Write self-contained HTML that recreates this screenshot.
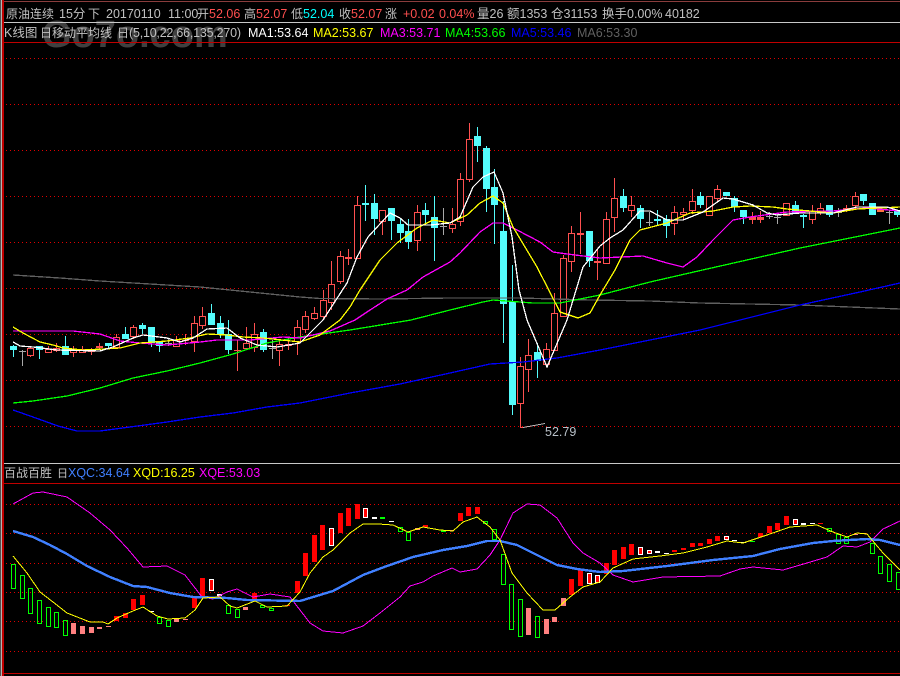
<!DOCTYPE html>
<html><head><meta charset="utf-8"><style>
html,body{margin:0;padding:0;background:#000;width:900px;height:676px;overflow:hidden}
svg{display:block}
text{font-family:"Liberation Sans","Noto Sans CJK SC",sans-serif;font-size:12.5px;fill:#c0c0c0}
.z{font-size:12px}
.r{fill:#ff4f4f}.c{fill:#00ffff}
</style></head><body>
<svg width="900" height="676" viewBox="0 0 900 676" xmlns="http://www.w3.org/2000/svg">
<defs><pattern id="d" x="2" y="0" width="4" height="1" patternUnits="userSpaceOnUse"><rect width="1" height="1" fill="#e00000"/></pattern></defs>
<rect width="900" height="676" fill="#000"/>
<text x="42" y="47" style="font-size:38px;font-weight:bold;fill:#404040">Go7o.com</text>
<g shape-rendering="crispEdges">
<path d="M0 1.5H900" stroke="#8a3c3c"/>
<path d="M3 22.5H900" stroke="#c8c8c8"/>
<path d="M3 42.5H900M3 483.5H900M3 673.5H900" stroke="#c00000"/>
<path d="M3 463.5H900" stroke="#c8c8c8"/>
<rect x="0" y="0" width="1" height="676" fill="#505050"/>
<rect x="1" y="0" width="1" height="676" fill="#b4b4b4"/>
<rect x="2" y="0" width="2" height="676" fill="#c00000"/>
<g fill="url(#d)"><rect x="5" y="58" width="895" height="1"/><rect x="5" y="104" width="895" height="1"/><rect x="5" y="150" width="895" height="1"/><rect x="5" y="196" width="895" height="1"/><rect x="5" y="242" width="895" height="1"/><rect x="5" y="288" width="895" height="1"/><rect x="5" y="334" width="895" height="1"/><rect x="5" y="380" width="895" height="1"/><rect x="5" y="426" width="895" height="1"/><rect x="5" y="504" width="895" height="1"/><rect x="5" y="533" width="895" height="1"/><rect x="5" y="563" width="895" height="1"/><rect x="5" y="592" width="895" height="1"/><rect x="5" y="621" width="895" height="1"/><rect x="5" y="651" width="895" height="1"/></g>

<!-- wicks -->
<path stroke="#ff5050" fill="none" d="M30.5 346V357M48.5 346V353M56.5 343V352M73.5 346V357M82.5 346V353M91.5 348V355M99.5 343V350M116.5 334V349M133.5 325V339M176.5 336V346M185.5 334V345M194.5 316V352M202.5 307V329M237.5 340V371M246.5 327V350M254.5 323V352M279.5 340V366M288.5 337V350M297.5 320V355M305.5 311V333M314.5 307V320M323.5 290V320M331.5 261V310M340.5 251V284M348.5 249V265M357.5 196V258M382.5 210V235M417.5 205V251M452.5 208V233M460.5 173V226M469.5 123V182M520.5 357V428M528.5 339V392M546.5 343V364M554.5 293V350M563.5 255V316M571.5 226V272M580.5 212V254M597.5 250V280M606.5 212V263M614.5 178V232M631.5 196V217M674.5 206V235M683.5 208V220M692.5 189V214M717.5 185V201M752.5 212V224M760.5 211V223M812.5 205V224M820.5 203V215M846.5 205V212M855.5 192V210"/>
<path stroke="#54fcfc" fill="none" d="M13.5 345V357M39.5 346V359M65.5 336V355M108.5 343V349M125.5 327V339M142.5 323V334M151.5 327V347M159.5 342V352M211.5 304V325M220.5 316V338M228.5 320V354M263.5 329V352M365.5 185V221M374.5 194V235M391.5 208V240M400.5 219V243M408.5 219V249M425.5 203V223M434.5 196V261M477.5 127V162M486.5 146V212M494.5 169V244M503.5 201V343M512.5 265V415M537.5 343V378M589.5 231V267M623.5 189V212M640.5 205V228M657.5 210V226M666.5 215V238M700.5 192V208M734.5 196V212M743.5 210V224M795.5 201V214M803.5 214V228M829.5 205V217M863.5 194V205M872.5 203V215M897.5 210V217"/>
<path stroke="#a8a8a8" fill="none" d="M22.5 350V366M19 351.5H26M168.5 338V346M165 343.5H172M272.5 340V359M269 348.5H276M443.5 208V235M440 226.5H447M649.5 212V226M646 222.5H653M769.5 212V219M766 216.5H773M777.5 213V224M774 217.5H781M838.5 208V217M835 212.5H842M889.5 210V224M886 212.5H893"/>

<!-- cyan bodies -->
<path fill="#54fcfc" d="M10 346h7v4h-7zM36 346h7v4h-7zM62 346h7v9h-7zM105 343h7v3h-7zM122 334h7v5h-7zM139 325h7v4h-7zM148 327h7v16h-7zM156 342h7v4h-7zM208 313h7v12h-7zM217 323h7v11h-7zM225 334h7v16h-7zM260 332h7v18h-7zM362 203h7v2h-7zM371 203h7v16h-7zM388 208h7v13h-7zM397 224h7v9h-7zM405 231h7v11h-7zM422 210h7v5h-7zM431 217h7v11h-7zM474 136h7v10h-7zM483 148h7v41h-7zM491 187h7v18h-7zM500 231h7v73h-7zM509 302h7v103h-7zM534 352h7v9h-7zM586 231h7v30h-7zM620 196h7v12h-7zM637 208h7v11h-7zM654 219h7v2h-7zM663 219h7v7h-7zM697 196h7v9h-7zM723 192h7v4h-7zM731 198h7v9h-7zM740 210h7v7h-7zM792 205h7v9h-7zM800 215h7v2h-7zM826 205h7v10h-7zM860 194h7v7h-7zM869 203h7v12h-7zM894 210h7v5h-7z"/>
<!-- red hollow bodies -->
<path stroke="#ff5050" fill="#000" d="M27.5 348.5h6v7h-6zM45.5 349.5h6v3h-6zM53.5 348.5h6v2h-6zM70.5 349.5h6v3h-6zM79.5 349.5h6v3h-6zM113.5 337.5h6v10h-6zM130.5 327.5h6v9h-6zM173.5 340.5h6v6h-6zM191.5 323.5h6v18h-6zM199.5 316.5h6v9h-6zM243.5 343.5h6v5h-6zM251.5 334.5h6v13h-6zM276.5 344.5h6v6h-6zM294.5 327.5h6v14h-6zM302.5 316.5h6v13h-6zM311.5 313.5h6v5h-6zM320.5 300.5h6v16h-6zM328.5 284.5h6v18h-6zM337.5 256.5h6v25h-6zM354.5 205.5h6v53h-6zM379.5 210.5h6v11h-6zM414.5 212.5h6v28h-6zM449.5 224.5h6v4h-6zM457.5 179.5h6v42h-6zM466.5 139.5h6v40h-6zM517.5 366.5h6v37h-6zM525.5 355.5h6v14h-6zM543.5 349.5h6v15h-6zM551.5 313.5h6v37h-6zM560.5 258.5h6v58h-6zM568.5 233.5h6v28h-6zM603.5 219.5h6v44h-6zM611.5 198.5h6v19h-6zM628.5 205.5h6v5h-6zM671.5 212.5h6v11h-6zM680.5 212.5h6v2h-6zM689.5 201.5h6v9h-6zM706.5 196.5h6v19h-6zM714.5 189.5h6v9h-6zM783.5 203.5h6v12h-6zM809.5 211.5h6v8h-6zM817.5 208.5h6v3h-6zM852.5 196.5h6v9h-6z"/>
<!-- red thin filled -->
<path fill="#ff5050" d="M88 350h7v2h-7zM96 346h7v2h-7zM182 340h7v1h-7zM234 350h7v1h-7zM285 344h7v2h-7zM345 257h7v2h-7zM577 233h7v2h-7zM594 261h7v2h-7zM749 217h7v3h-7zM757 217h7v3h-7zM843 208h7v3h-7z"/>
<rect x="877" y="209" width="7" height="3" fill="#ff7040"/>
<path stroke="#ff5050" d="M520 427.5h4"/>
<path stroke="#b8b8b8" fill="none" d="M523 427.5L545 423.5"/>

<!-- MA lines -->
<g fill="none" stroke-width="1.3">
<path stroke="#606060" d="M13 275L60 278L100 281L150 284L200 287L250 292L300 297L320 298.500L380 299L450 298L480 298L520 298L590 300L650 301L700 303L800 305L900 309"/>
<path stroke="#0000ff" d="M13 410L33 417L58 426L77 431L100 431L130 427L167 422L200 417L233 413L267 407L300 403L350 393L400 384L450 373L490 364L523 362L557 358L600 350L700 330L800 305L860 292L900 283"/>
<path stroke="#00ff00" d="M13 403L33 401L67 396L100 388L133 378L167 371L200 363L233 354L267 343L300 337L350 330L411 320L450 310L483 302L493 300L533 303L560 303L600 295L650 282L707 269L800 248L900 228"/>
<path stroke="#ff00ff" d="M13 331L73 331L100 334L120 341L140 343L167 345L200 342L217 340L250 340L283 337L300 338L330 331L355 320L367 312L387 299L407 290L423 277L450 262L460 253L480 232L493 223L503 223L517 230L540 242L553 252L567 254L600 258L643 256L667 263L683 267L697 257L713 240L733 220L750 217L787 212L833 211L867 208L900 211"/>
<path stroke="#ffff00" d="M13 327L23 333L40 342L53 345L63 348L83 350L103 349L120 348L140 343L167 341L190 338L207 334L227 335L243 337L263 338L273 339L300 342L320 335L340 320L350 307L360 290L380 260L397 243L417 228L433 220L450 223L467 215L480 203L493 196L503 203L513 227L537 267L560 312L578 318L590 313L600 295L615 270L630 240L640 230L667 223L690 213L713 211L733 207L750 206L773 207L787 209L833 213L857 209L900 207"/>
<path stroke="#ffffff" d="M13 342L20 346L33 347L57 350L100 351L113 347L133 338L143 335L167 338L180 342L193 338L207 329L227 328L240 338L257 345L277 347L300 343L323 320L347 283L357 257L368 237L390 213L400 218L408 225L430 225L450 223L460 217L473 187L483 177L494 172L503 193L512 237L519 290L527 320L547 367L567 320L583 267L600 246L610 238L623 230L640 211L650 211L667 220L683 220L703 212L723 198L733 199L753 205L767 213L777 215L800 213L833 213L857 207L887 207L900 211"/>
</g>

<!-- sub bars -->
<path fill="#ff0000" d="M114 616h5v5h-5zM123 613h5v5h-5zM131 599h5v11h-5zM140 595h5v10h-5zM192 597h5v11h-5zM200 578h5v18h-5zM252 593h5v6h-5zM285 605h5v1h-5zM295 581h5v12h-5zM303 553h5v23h-5zM312 535h5v27h-5zM320 525h5v25h-5zM338 513h5v20h-5zM346 508h5v18h-5zM355 504h5v15h-5zM423 525h5v2h-5zM458 513h5v8h-5zM466 507h5v9h-5zM475 507h5v7h-5zM569 579h5v16h-5zM578 569h5v17h-5zM604 563h5v11h-5zM612 550h5v15h-5zM621 547h5v12h-5zM629 544h5v11h-5zM672 550h5v2h-5zM681 548h5v2h-5zM690 543h5v4h-5zM698 543h5v3h-5zM707 539h5v5h-5zM715 536h5v5h-5zM758 533h5v4h-5zM767 526h5v7h-5zM775 523h5v7h-5zM784 516h5v9h-5zM818 523h5v1h-5z"/>
<path fill="#ff0000" stroke="#ffffff" d="M209.500 579.500h4v11h-4zM329.500 528.500h4v17h-4zM363.500 508.500h4v9h-4zM587.500 573.500h4v10h-4zM595.500 575.500h4v7h-4zM638.500 547.500h4v7h-4zM647.500 550.500h4v3h-4zM724.500 536.500h4v3h-4zM793.500 519.500h4v5h-4z"/>
<path fill="none" stroke="#ffffff" d="M372.500 517.500h4v1h-4z"/>
<path fill="#ffffff" d="M149 611h5v1h-5zM217 594h5v2h-5zM389 521h5v1h-5zM655 551h5v2h-5zM664 553h5v1h-5zM732 540h5v1h-5zM741 542h5v1h-5zM801 523h5v2h-5zM810 523h5v1h-5z"/>
<path fill="#ff8080" d="M71 623h5v11h-5zM80 626h5v8h-5zM89 627h5v6h-5zM97 627h5v2h-5zM106 626h5v1h-5zM174 619h5v3h-5zM183 619h5v1h-5zM243 607h5v3h-5zM277 606h5v1h-5zM415 528h5v2h-5zM449 530h5v1h-5zM526 608h5v27h-5zM544 619h5v15h-5zM552 617h5v5h-5zM561 598h5v8h-5zM853 534h5v1h-5zM861 533h5v1h-5z"/>
<path fill="#00ff00" d="M380 517h5v2h-5zM441 530h5v2h-5zM750 541h5v1h-5z"/>
<path fill="none" stroke="#00ff00" d="M11.500 564.500h4v24h-4zM20.500 575.500h4v23h-4zM28.500 588.500h4v25h-4zM37.500 600.500h4v23h-4zM46.500 607.500h4v19h-4zM54.500 612.500h4v15h-4zM63.500 620.500h4v15h-4zM157.500 617.500h4v6h-4zM166.500 620.500h4v6h-4zM226.500 605.500h4v8h-4zM235.500 609.500h4v8h-4zM260.500 605.500h4v2h-4zM269.500 608.500h4v2h-4zM398.500 527.500h4v4h-4zM406.500 532.500h4v8h-4zM483.500 521.500h4v2h-4zM492.500 529.500h4v10h-4zM501.500 554.500h4v30h-4zM509.500 584.500h4v45h-4zM518.500 599.500h4v37h-4zM535.500 616.500h4v21h-4zM827.500 528.500h4v3h-4zM836.500 534.500h4v9h-4zM844.500 537.500h4v6h-4zM870.500 543.500h4v10h-4zM878.500 556.500h4v17h-4zM887.500 564.500h4v17h-4zM896.500 572.500h4v17h-4z"/>

<!-- sub lines -->
<g fill="none">
<path stroke="#ff00ff" d="M13 504L33 493L43 492L67 497L90 513L110 530L127 548L143 567L167 566L185 575L202 597L213 599L227 592L237 589L253 597L270 594L290 597L300 610L310 623L323 631L343 633L363 626L380 613L400 597L410 586L423 582L433 576L452 568L460 572L477 569L490 555L500 540L513 513L527 504L540 505L557 518L573 543L583 553L600 563L613 575L633 582L663 577L720 576L740 569L753 567L783 570L807 563L827 557L843 546L857 547L870 542L883 529L900 521"/>
<path stroke="#4080ff" stroke-width="2.4" d="M13 531L33 537L50 545L67 554L87 566L110 577L133 586L147 587L170 593L193 597L227 598L247 600L300 601L333 591L363 575L387 566L413 557L443 550L467 546L487 541L500 541L517 545L537 555L557 565L577 569L600 572L623 571L667 566L713 560L753 556L780 549L813 543L833 541L867 539L880 540L900 545"/>
<path stroke="#ffff00" d="M13 556L27 573L40 592L53 602L67 613L90 622L103 622L108 624L117 618L133 611L143 607L157 616L168 619L185 618L195 610L203 598L220 597L230 606L237 608L255 601L267 607L287 606L300 592L310 573L323 557L333 550L350 533L363 524L378 524L393 525L408 532L423 527L440 530L453 531L463 522L477 517L490 527L500 540L512 573L527 593L543 610L555 610L570 597L583 587L600 582L613 568L633 559L660 556L683 553L707 547L727 541L743 543L767 535L790 527L817 525L833 532L847 537L857 533L867 534L883 553L900 570"/>
</g>
</g>

<!-- header text -->
<text x="6" y="18" class="z">原油连续</text><text x="59" y="18">15分</text><text x="88" y="18" class="z">下</text>
<text x="106" y="18">20170110</text><text x="168" y="18">11:00</text><text x="197" y="18" class="z">开</text><text x="209" y="18" class="r">52.06</text>
<text x="244" y="18" class="z">高</text><text x="256" y="18" class="r">52.07</text>
<text x="291" y="18" class="z">低</text><text x="303" y="18" class="c">52.04</text>
<text x="339" y="18" class="z">收</text><text x="351" y="18" class="r">52.07</text>
<text x="385" y="18" class="z">涨</text><text x="403" y="18" class="r">+0.02</text><text x="439" y="18" class="r">0.04%</text>
<text x="477" y="18">量26</text><text x="507" y="18">额1353</text><text x="551" y="18">仓31153</text><text x="602" y="18">换手0.00%</text><text x="665" y="18">40182</text>

<text x="4" y="37">K线图</text><text x="40" y="37" class="z">日移动平均线</text><text x="117" y="37" class="z">日</text><text x="129" y="37" textLength="112">(5,10,22,66,135,270)</text>
<text x="248" y="37" style="fill:#ffffff">MA1:53.64</text>
<text x="313" y="37" style="fill:#ffff00">MA2:53.67</text>
<text x="380" y="37" style="fill:#ff00ff">MA3:53.71</text>
<text x="445" y="37" style="fill:#00ff00">MA4:53.66</text>
<text x="511" y="37" style="fill:#0000ff">MA5:53.46</text>
<text x="577" y="37" style="fill:#606060">MA6:53.30</text>

<text x="545" y="436" style="fill:#b8c0c8">52.79</text>

<text x="4" y="477" class="z">百战百胜</text><text x="57" y="477" style="font-size:11px">日</text>
<text x="68" y="477" style="fill:#4080ff">XQC:34.64</text>
<text x="133" y="477" style="fill:#ffff00">XQD:16.25</text>
<text x="199" y="477" style="fill:#ff00ff">XQE:53.03</text>
</svg>
</body></html>
